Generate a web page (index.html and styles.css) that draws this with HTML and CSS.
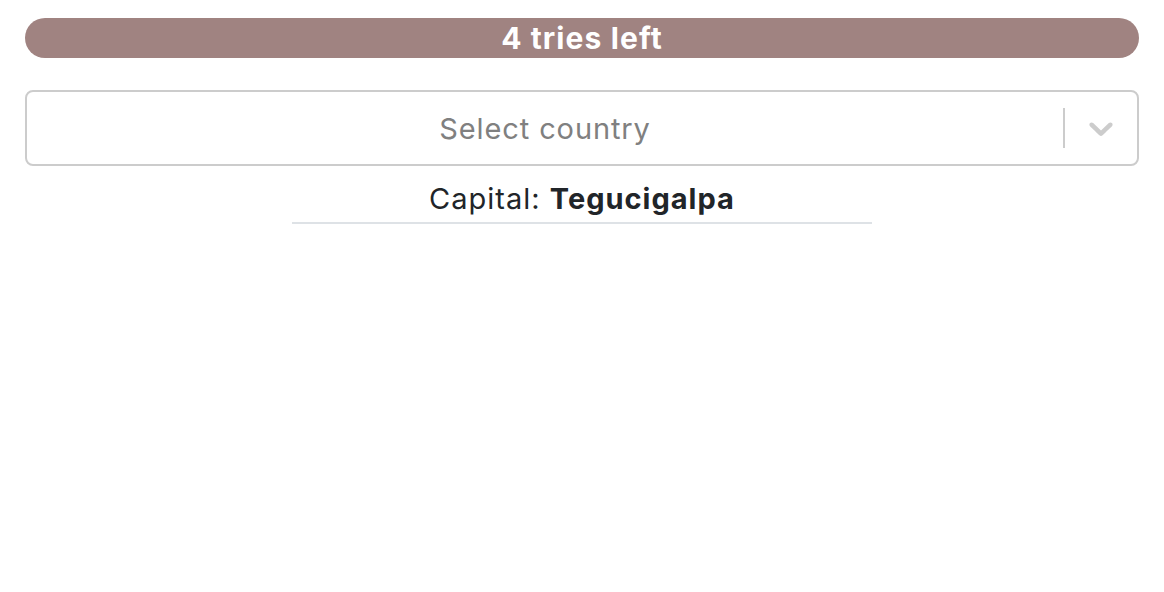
FILE: index.html
```html
<!DOCTYPE html>
<html>
<head>
<meta charset="utf-8">
<link rel="stylesheet" href="styles.css">
</head>
<body>
<div class="page">
  <div class="tries">4 tries left</div>
  <div class="select">
    <div class="select-value">Select country</div>
    <div class="select-indicators">
      <span class="sep"></span>
      <span class="chevron">
        <svg width="40" height="40" viewBox="0 0 20 20"><path fill="#cccccc" d="M4.516 7.548c0.436-0.446 1.043-0.481 1.576 0l3.908 3.747 3.908-3.747c0.533-0.481 1.141-0.446 1.574 0 0.436 0.445 0.408 1.197 0 1.615-0.406 0.418-4.695 4.502-4.695 4.502-0.217 0.223-0.502 0.335-0.787 0.335s-0.57-0.112-0.789-0.335c0 0-4.287-4.084-4.695-4.502s-0.436-1.17 0-1.615z"/></svg>
      </span>
    </div>
  </div>
  <div class="capital">
    <div class="capital-text">Capital: <b>Tegucigalpa</b></div>
  </div>
</div>
</body>
</html>
```
FILE: styles.css
```css
html, body { margin: 0; padding: 0; background: #fff; }
.page {
  padding: 18px 25px;
  display: flex;
  flex-direction: column;
  align-items: stretch;
}
.tries {
  height: 40px;
  border-radius: 20px;
  background: #a08381;
  color: #fff;
  font-family: Inter, "Liberation Sans", sans-serif;
  font-weight: 700;
  font-size: 30px;
  letter-spacing: 1.1px;
  line-height: 40px;
  text-align: center;
}
.select {
  margin-top: 32px;
  height: 76px;
  box-sizing: border-box;
  border: 2px solid #cccccc;
  border-radius: 8px;
  display: flex;
  align-items: center;
}
.select-value {
  flex: 1;
  text-align: center;
  font-family: Inter, "Liberation Sans", sans-serif;
  font-size: 29px;
  letter-spacing: 0.9px;
  color: #808080;
}
.select-indicators {
  display: flex;
  align-items: center;
  height: 100%;
}
.sep {
  width: 2px;
  height: 40px;
  background: #cccccc;
}
.chevron {
  width: 72px;
  display: flex;
  justify-content: center;
  align-items: center;
}
.chevron svg { display: block; }
.capital {
  display: flex;
  justify-content: center;
  margin-top: 16px;
}
.capital-text {
  width: 580px;
  text-align: center;
  font-family: Inter, "Liberation Sans", sans-serif;
  font-size: 29px;
  letter-spacing: 1px;
  color: #212529;
  line-height: 34px;
  padding-bottom: 6px;
  border-bottom: 2px solid #dee2e6;
}
.capital-text b { font-weight: 700; }
```
